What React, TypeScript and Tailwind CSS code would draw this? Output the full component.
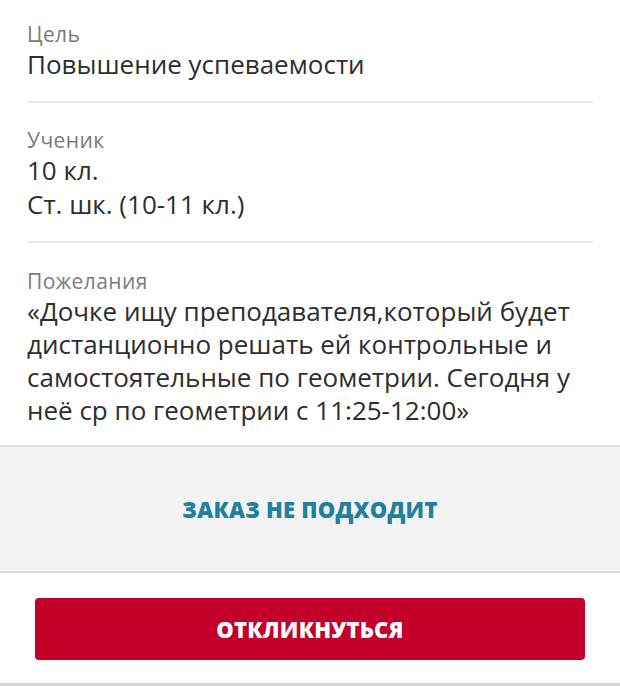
import React from 'react';

const font = { fontFamily: '"Open Sans", "Noto Sans", sans-serif' };

function Field({ label, lines, top, leading, gap }: { label: string; lines: string[]; top: string; leading: string; gap: string }) {
  return (
    <div className={top}>
      <div className="text-[21px] leading-[26px] tracking-[0.02em] text-[#7b7b7b]">{label}</div>
      <div className={`text-[26px] text-[#2e2e2e] ${leading} ${gap}`}>
        {lines.map((l, i) => (
          <div key={i}>{l}</div>
        ))}
      </div>
    </div>
  );
}

export default function App() {
  return (
    <div className="w-[620px] h-[686px] bg-white overflow-hidden flex flex-col" style={font}>
      {/* Details card */}
      <div className="px-[27px] border-b-[2px] border-[#dedede]">
        <div className="pb-[20px] border-b-[2px] border-[#ececec]">
          <Field label="Цель" lines={['Повышение успеваемости']} top="pt-[21px]" leading="leading-[34px]" gap="mt-0" />
        </div>
        <div className="pb-[20px] border-b-[2px] border-[#ececec]">
          <Field label="Ученик" lines={['10 кл.', 'Ст. шк. (10-11 кл.)']} top="pt-[24px]" leading="leading-[34px]" gap="mt-0" />
        </div>
        <div className="pb-[18px]">
          <Field
            label="Пожелания"
            lines={[
              '«Дочке ищу преподавателя,который будет',
              'дистанционно решать ей контрольные и',
              'самостоятельные по геометрии. Сегодня у',
              'неё ср по геометрии с 11:25-12:00»',
            ]}
            top="pt-[25px]"
            leading="leading-[33px]"
            gap="mt-[1px]"
          />
        </div>
      </div>

      {/* Decline */}
      <div className="h-[126px] bg-[#f3f3f3] flex items-center justify-center border-b-[2px] border-[#dcdcdc]">
        <button className="text-[22px] font-extrabold tracking-[0.01em] text-[#20809d]">ЗАКАЗ НЕ ПОДХОДИТ</button>
      </div>

      {/* Respond */}
      <div className="flex-1 flex flex-col justify-start pt-[25px] border-b-[3px] border-[#d6d6d6]">
        <button className="mx-[35px] h-[62px] rounded-[4px] bg-[#c3002a] text-white text-[22px] font-extrabold tracking-[0.01em]">
          ОТКЛИКНУТЬСЯ
        </button>
      </div>
    </div>
  );
}
